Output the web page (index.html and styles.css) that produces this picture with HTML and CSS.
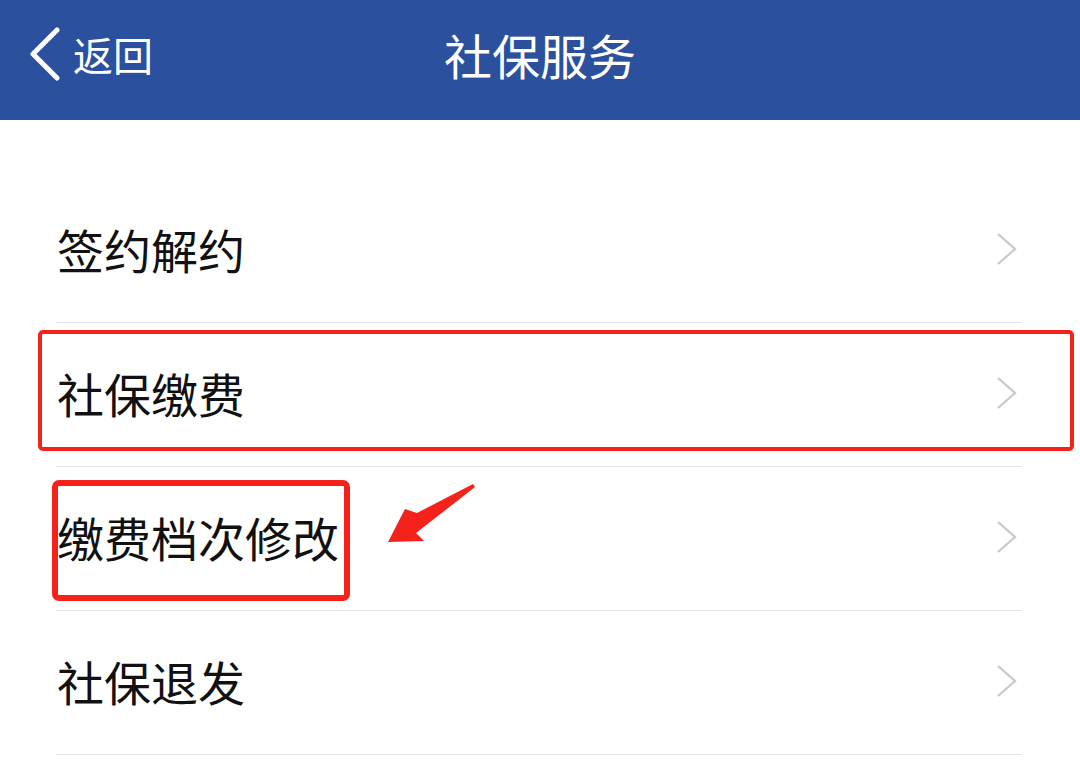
FILE: index.html
```html
<!DOCTYPE html>
<html lang="zh-CN">
<head>
    <meta charset="UTF-8">
    <meta name="viewport" content="width=device-width, initial-scale=1.0">
    <title>社保服务</title>
    <link rel="stylesheet" href="styles.css">
</head>
<body>
    <div class="topbar">
        <div class="back">
            <svg class="back-icon" width="36" height="54" viewBox="0 0 36 54">
                <path d="M31 3 L7 27 L31 51" fill="none" stroke="#fff" stroke-width="5" stroke-linecap="round" stroke-linejoin="round"/>
            </svg>
            <span>返回</span>
        </div>
        <div class="title">社保服务</div>
    </div>

    <div class="menu">
        <div class="item">
            <span class="label">签约解约</span>
            <svg class="chevron" width="24" height="36" viewBox="0 0 24 36"><path d="M3 3 L20 18 L3 33" fill="none" stroke="#c7c7cc" stroke-width="2.2"/></svg>
        </div>
        <div class="item">
            <span class="label">社保缴费</span>
            <svg class="chevron" width="24" height="36" viewBox="0 0 24 36"><path d="M3 3 L20 18 L3 33" fill="none" stroke="#c7c7cc" stroke-width="2.2"/></svg>
        </div>
        <div class="item">
            <span class="label">缴费档次修改</span>
            <svg class="chevron" width="24" height="36" viewBox="0 0 24 36"><path d="M3 3 L20 18 L3 33" fill="none" stroke="#c7c7cc" stroke-width="2.2"/></svg>
        </div>
        <div class="item">
            <span class="label">社保退发</span>
            <svg class="chevron" width="24" height="36" viewBox="0 0 24 36"><path d="M3 3 L20 18 L3 33" fill="none" stroke="#c7c7cc" stroke-width="2.2"/></svg>
        </div>

        <!-- annotation marks drawn over the list -->
        <div class="mark mark-row"></div>
        <div class="mark mark-label"></div>
        <svg class="arrow" width="92" height="62" viewBox="0 0 92 62">
            <path d="M87 0 L31 29 L19 25 L2 58 L38 57 L30 49 L89 3 Z" fill="#f5221b"/>
        </svg>
    </div>
</body>
</html>
```

FILE: styles.css
```css
body {
    margin: 0;
    padding: 0;
    background: #fff;
    font-family: "Noto Sans CJK SC", "Noto Sans", sans-serif;
    color: #111;
}

.topbar {
    height: 120px;
    background-color: #2a509e;
    color: #fff;
    display: flex;
    align-items: center;
    position: relative;
}

.back {
    display: flex;
    align-items: center;
    padding-left: 26px;
    font-size: 40px;
    margin-top: -12px;
    gap: 11px;
}

.back-icon {
    display: block;
}

.title {
    position: absolute;
    left: 0;
    right: 0;
    top: 0;
    height: 108px;
    line-height: 108px;
    text-align: center;
    font-size: 48px;
    pointer-events: none;
}

.menu {
    position: relative;
    padding-top: 59px;
}

.item {
    height: 143px;
    margin: 0 58px 0 56px;
    border-bottom: 1px solid #e4e4e6;
    display: flex;
    align-items: center;
    justify-content: space-between;
}

.label {
    font-size: 47px;
    padding-left: 1px;
    margin-top: -4px;
}

.chevron {
    display: block;
    margin-right: 3px;
    margin-top: -4px;
}

.mark {
    position: absolute;
    border: 4px solid #f5221b;
    box-sizing: border-box;
}

.mark-row {
    left: 38px;
    top: 210px;
    width: 1036px;
    height: 121px;
    border-radius: 5px;
}

.mark-label {
    left: 52px;
    top: 360px;
    width: 298px;
    height: 121px;
    border-width: 6px;
    border-radius: 7px;
}

.arrow {
    position: absolute;
    left: 386px;
    top: 364px;
}
```
